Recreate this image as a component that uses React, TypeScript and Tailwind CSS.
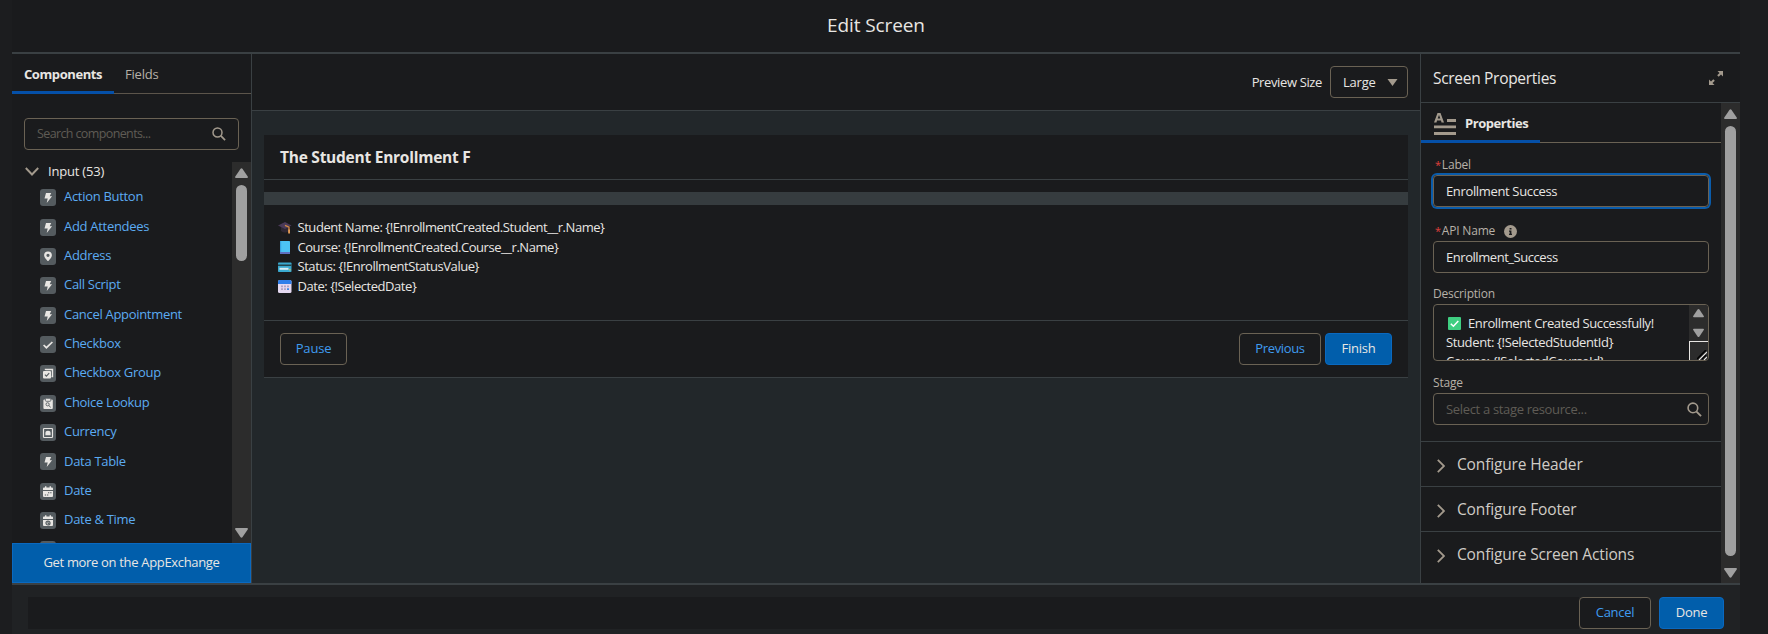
import React from "react";

type P = { children?: React.ReactNode; className?: string };

const T = ({ children, className = "" }: P) => (
  <span className={`block whitespace-nowrap ${className}`}>{children}</span>
);

function Glyph({ kind }: { kind: string }) {
  return (
    <svg width="16" height="17" viewBox="0 0 16 17" className="shrink-0">
      <rect width="16" height="17" rx="3" fill="#545b5f" />
      {kind === "bolt" && <path d="M6 4h5.2L9.700 7.200h2.400L6.700 13.900 7.700 9.500H4.500z" fill="#e8e6e3" />}
      {kind === "pin" && (
        <path fillRule="evenodd" d="M8 3.4a3.9 3.9 0 0 0-3.9 3.9c0 2.3 2.6 4.4 3.3 5.5.3.4.9.4 1.2 0 .7-1.1 3.3-3.2 3.3-5.5A3.9 3.9 0 0 0 8 3.4zm0 2.3a1.6 1.6 0 1 1 0 3.2 1.6 1.6 0 0 1 0-3.2z" fill="#e8e6e3" />
      )}
      {kind === "check" && <path d="M3.6 9l2.8 2.7 6-5.7" stroke="#e8e6e3" strokeWidth="1.7" fill="none" />}
      {kind === "group" && (
        <>
          <path d="M5.5 5V4.500h7v7h-1" stroke="#e8e6e3" strokeWidth="1.4" fill="none" />
          <rect x="3" y="6" width="8" height="7.5" rx="1" fill="#e8e6e3" />
          <path d="M4.9 9.7l1.5 1.5 2.8-3" stroke="#545b5f" strokeWidth="1.1" fill="none" />
        </>
      )}
      {kind === "lookup" && (
        <>
          <rect x="3.4" y="4.500" width="9.4" height="9.500" rx="1" fill="#e8e6e3" />
          <rect x="5.4" y="3.300" width="5.4" height="3" rx="0.8" fill="#e8e6e3" stroke="#545b5f" strokeWidth="0.8" />
          <circle cx="7.6" cy="9.3" r="1.6" stroke="#545b5f" strokeWidth="0.9" fill="none" />
          <path d="M8.9 10.6l1.8 1.7" stroke="#545b5f" />
        </>
      )}
      {kind === "currency" && (
        <>
          <rect x="3.5" y="4.5" width="9" height="9" rx="0.8" stroke="#e8e6e3" strokeWidth="1.2" fill="none" />
          <path d="M5.4 11.2V9.2a2.6 2.4 0 0 1 5.2 0v2z" fill="#e8e6e3" />
        </>
      )}
      {(kind === "date" || kind === "datetime") && (
        <>
          <path d="M3 7V5.4a1 1 0 0 1 1-1h1V3.3h1.4v1.1h3.2V3.3H11v1.1h1a1 1 0 0 1 1 1V7z" fill="#e8e6e3" />
          <path d="M3 7.9h10V13a1 1 0 0 1-1 1H4a1 1 0 0 1-1-1z" fill="#e8e6e3" />
          {kind === "date" ? (
            <path d="M8 9.7h1.3M10.2 9.7h1.3M4.8 12h1.3M7 12h1.3" stroke="#545b5f" strokeWidth="1.1" />
          ) : (
            <path d="M8 9a2 2 0 1 1 0 4 2 2 0 0 1 0-4zM8 9.6v1.6l1 .5" stroke="#545b5f" strokeWidth="1.200" fill="none" />
          )}
        </>
      )}
    </svg>
  );
}

const Search = ({ size = 14 }: { size?: number }) => (
  <svg width={size} height={size} viewBox="0 0 14 14" fill="none" stroke="#a39a8d" className="shrink-0">
    <circle cx="5.5" cy="5.5" r="4.5" strokeWidth="1.5" />
    <path d="M8.9 8.9l4.2 4.2" strokeWidth="1.7" />
  </svg>
);

const Tri = ({ down = false, w = 13 }: { down?: boolean; w?: number }) => (
  <svg width={w} height="10" viewBox="0 0 13 10" className="shrink-0" fill="#a0a0a0">
    {down ? (
      <path d="M1 0h11q1.4.3.7 1.5L7.6 9q-1.1 1.3-2.2 0L.3 1.5Q-.4.3 1 0z" />
    ) : (
      <path d="M1 10h11q1.4-.3.7-1.5L7.6 1Q6.500-.3 5.400 1L.3 8.500Q-.4 9.700 1 10z" />
    )}
  </svg>
);

const items: [string, string][] = [
  ["bolt", "Action Button"],
  ["bolt", "Add Attendees"],
  ["pin", "Address"],
  ["bolt", "Call Script"],
  ["bolt", "Cancel Appointment"],
  ["check", "Checkbox"],
  ["group", "Checkbox Group"],
  ["lookup", "Choice Lookup"],
  ["currency", "Currency"],
  ["bolt", "Data Table"],
  ["date", "Date"],
  ["datetime", "Date & Time"],
  ["bolt", ""],
];

function Left() {
  return (
    <aside className="flex w-[240px] shrink-0 flex-col border-r border-[#3a4043]">
      <div className="flex h-10 border-b border-[#5c554b]">
        <div className="h-10 w-[102px] border-b-3 border-[#0550a8] pl-3 pt-[10px] leading-[20px]">
          <T className="font-bold tracking-[-0.42px]">Components</T>
        </div>
        <T className="pl-[11px] pt-[10px] leading-[20px] tracking-[-0.2px] text-[#b7b1a8]">Fields</T>
      </div>
      <div className="mx-3 mt-6 flex h-8 w-[215px] items-center justify-between rounded border border-[#6a6254] pl-3 pr-3">
        <T className="pt-px text-[12.500px] tracking-[-0.620px] text-[#5f5b55]">Search components...</T>
        <Search />
      </div>
      <div className="mt-3 flex h-[381px]">
        <div className="flex-1 overflow-hidden">
          <div className="flex h-[18px] items-center gap-[9px] pl-[13px]">
            <svg width="14" height="9" viewBox="0 0 14 9" fill="none" stroke="#a39a8d" strokeWidth="1.900">
              <path d="M.8 1L7 7.500 13.200 1" />
            </svg>
            <T className="pt-[2px] tracking-[-0.2px]">Input (53)</T>
          </div>
          <ul className="mt-[3px]">
            {items.map(([k, t], i) => (
              <li key={i} className="flex h-[29.35px] items-center gap-2 pl-7 text-[#5cabf2]">
                <Glyph kind={k} />
                <T className="-mt-[1px]">{t}</T>
              </li>
            ))}
          </ul>
        </div>
        <div className="flex w-[19px] flex-col items-center bg-[#2c2c2c] pt-[6px] pb-[5px]">
          <Tri />
          <div className="mt-[7px] h-[76px] w-[11px] rounded-full bg-[#a0a0a0]" />
          <div className="flex-1" />
          <Tri down />
        </div>
      </div>
      <button className="flex h-10 items-center justify-center border border-[#0a69c0] bg-[#015eab]">
        <T className="tracking-[-0.330px]">Get more on the AppExchange</T>
      </button>
    </aside>
  );
}

const cap = (
  <svg width="14" height="13" viewBox="0 0 14 13">
    <path d="M3 6v4q4 3 8 0V6z" fill="#2e2733" />
    <path d="M0 4.500L7 1l6.500 3.500L7 8z" fill="#4a3a58" />
    <path d="M7 4.300l4 1.800v5.500" stroke="#d48b45" strokeWidth="1.300" fill="none" />
    <path d="M10.200 8.500h1.800v4h-1.800z" fill="#e09a55" />
  </svg>
);
const book = (
  <svg width="14" height="13" viewBox="0 0 14 13">
    <rect x="2" width="10" height="13" rx=".6" fill="#4cc3f5" />
    <path d="M2 11h10v2H2z" fill="#5d6fc0" />
    <path d="M2 0h1.200v11H2z" fill="#38a4e2" />
  </svg>
);
const card = (
  <svg width="14" height="13" viewBox="0 0 14 13">
    <rect y="2.500" width="13.500" height="9.500" rx=".8" fill="#3aa9cf" />
    <path d="M0 4.500h13.500v1.500H0z" fill="#23454f" />
    <path d="M1.500 7.800h9v2h-9z" fill="#d9eef5" />
    <path d="M11.200 9h1.300v1.600h-1.300z" fill="#d9c25c" />
  </svg>
);
const cal = (
  <svg width="14" height="13" viewBox="0 0 14 13">
    <rect width="13.500" height="13" rx="1.500" fill="#e4d8f0" />
    <path d="M0 4V1.500Q0 0 1.500 0H12q1.500 0 1.500 1.500V4z" fill="#2f7fea" />
    <path d="M3 5.500h2v1.800H3zM6 5.500h2v1.800H6zM9 5.500h2v1.800H9zM3 8.200h2V10H3zM6 8.200h2V10H6z" fill="#b0a3c4" />
    <path d="M9 8.200h2V10H9z" fill="#3f8ae8" />
  </svg>
);

const BTN = "flex h-8 items-center justify-center rounded border";

function Center() {
  const rows: [React.ReactNode, string][] = [
    [cap, "Student Name: {!EnrollmentCreated.Student__r.Name}"],
    [book, "Course: {!EnrollmentCreated.Course__r.Name}"],
    [card, "Status: {!EnrollmentStatusValue}"],
    [cal, "Date: {!SelectedDate}"],
  ];
  return (
    <main className="flex min-w-0 flex-1 flex-col bg-[#22272a]">
      <div className="flex h-[57px] items-center justify-end gap-2 border-b border-[#3a4043] bg-[#1a1b1d] pr-3">
        <T className="pt-px tracking-[-0.370px]">Preview Size</T>
        <div className="flex h-8 w-[78px] items-center justify-between rounded border border-[#6a6254] pl-3 pr-[9px]">
          <T className="pt-px tracking-[-0.2px]">Large</T>
          <svg width="11" height="7" viewBox="0 0 11 7" fill="#a39a8d"><path d="M.5 0h10L5.500 7z" /></svg>
        </div>
      </div>
      <section className="mx-3 mt-6 flex h-[243px] flex-col border-b border-[#3a4043] bg-[#1a1b1d]">
        <div className="flex h-[45px] items-center border-b border-[#3a4043] pl-4">
          <T className="pt-[2px] text-[15.500px] font-bold tracking-[-0.250px]">The Student Enrollment F</T>
        </div>
        <div className="mt-3 h-[13px] bg-[#363c3f]" />
        <div className="mt-[13px] flex-1 pl-[14px]">
          {rows.map(([ic, t]) => (
            <div key={t} className="flex h-[19.500px] items-center gap-[5.500px]">
              {ic}
              <T className="tracking-[-0.450px]">{t}</T>
            </div>
          ))}
        </div>
        <div className="flex h-[57px] items-center border-t border-[#3a4043] px-4">
          <button className={`${BTN} w-[67px] border-[#6a6254] text-[#3f9bf0]`}><T className="tracking-[-0.2px]">Pause</T></button>
          <div className="flex-1" />
          <button className={`${BTN} mr-1 w-[82px] border-[#6a6254] text-[#3f9bf0]`}><T className="tracking-[-0.350px]">Previous</T></button>
          <button className={`${BTN} w-[67px] border-[#0a69c0] bg-[#015eab]`}><T className="tracking-[-0.2px]">Finish</T></button>
        </div>
      </section>
    </main>
  );
}

const Star = () => <span className="text-[11px] text-[#e0403c]">*</span>;
const FIELD = "flex h-8 w-[276px] items-center rounded border border-[#6a6254] px-3";
const LBL = "flex h-[18px] items-center text-[12px] tracking-[-0.2px] text-[#b7b1a8]";

function Right() {
  return (
    <aside className="flex w-[320px] shrink-0 flex-col border-l border-[#3a4043]">
      <div className="flex h-[49px] items-center justify-between border-b border-[#3a4043] pl-3 pr-[17px]">
        <T className="pt-[2px] text-[15.500px]">Screen Properties</T>
        <svg width="14" height="14" viewBox="0 0 14 14" fill="#a39a8d">
          <path d="M8.500 0H14v5.500l-2-2-2.300 2.300-1.500-1.500L10.500 2zM0 8.500l2 2 2.300-2.300 1.500 1.500L3.500 12l2 2H0z" />
        </svg>
      </div>
      <div className="flex min-h-0 flex-1">
        <div className="flex-1">
          <div className="flex h-10 border-b border-[#6a6254]">
            <div className="flex h-10 w-[119px] items-start gap-[9px] border-b-3 border-[#0550a8] pl-[13px] pt-[10px]">
              <svg width="22" height="22" viewBox="0 0 22 22" fill="#a39a8d" className="shrink-0">
                <path fillRule="evenodd" d="M0 9.500L3.500 0h3L10 9.500H7.500L7 7.500H3l-.5 2zM3.700 5.500h2.600L5 2zM13 6h9v3h-9zM0 12.500h22v2.700H0zM0 19h22v3H0z" />
              </svg>
              <T className="font-bold leading-[20px] tracking-[-0.450px]">Properties</T>
            </div>
          </div>
          <div className="flex h-[298px] flex-col pl-3">
            <div className={`${LBL} mt-[13px] gap-[1px] pl-[2px]`}><Star /><T>Label</T></div>
            <div className={`${FIELD} mt-[1px] shadow-[0_0_0_2px_#0a5cab]`}><T className="pt-px tracking-[-0.350px]">Enrollment Success</T></div>
            <div className={`${LBL} mt-[15px] gap-[1px] pl-[2px]`}>
              <Star /><T>API Name</T>
              <svg width="13" height="13" viewBox="0 0 13 13" className="ml-[8px]">
                <circle cx="6.500" cy="6.500" r="6.500" fill="#a39a8d" />
                <path d="M5.600 2.900h1.900v1.600H5.600zM5 5.600h2.400v3.200H8v1.100H5V8.800h.7V6.700H5z" fill="#1a1b1d" />
              </svg>
            </div>
            <div className={`${FIELD} mt-[1px]`}><T className="pt-px tracking-[-0.450px]">Enrollment_Success</T></div>
            <div className={`${LBL} mt-[12px]`}><T>Description</T></div>
            <div className="mt-[1px] flex h-[57px] w-[276px] overflow-hidden rounded border border-[#6a6254]">
              <div className="flex-1 pl-3 pt-[9px] leading-[19px] tracking-[-0.370px]">
                <div className="flex h-[19px] items-center gap-[7px] pl-[2px]">
                  <svg width="13" height="13" viewBox="0 0 13 13">
                    <rect width="13" height="13" rx="1" fill="#3fce81" />
                    <path d="M2.800 6.800l2.600 2.500 4.900-5.300" stroke="#fff" strokeWidth="1.500" fill="none" />
                  </svg>
                  <T>Enrollment Created Successfully!</T>
                </div>
                <T>Student: {"{!SelectedStudentId}"}</T>
                <T>Course: {"{!SelectedCourseId}"}</T>
              </div>
              <div className="flex w-[19px] flex-col">
                <div className="flex h-[36px] flex-col items-center justify-between bg-[#2c2c2c] pb-[3px] pt-[3px]">
                  <Tri w={11} /><Tri w={11} down />
                </div>
                <div className="flex flex-1 items-end justify-end border-l border-t border-[#e8e6e3] bg-[#2c2c2c] pr-[1px]">
                  <svg width="10" height="10" viewBox="0 0 10 10" strokeWidth="1.500">
                    <path d="M0 9L9 0M5 9l4-4" stroke="#000" />
                    <path d="M2 10l8-8M7 10l3-3" stroke="#e8e6e3" strokeWidth="1.100" />
                  </svg>
                </div>
              </div>
            </div>
            <div className={`${LBL} mt-[13px]`}><T>Stage</T></div>
            <div className={`${FIELD} mt-[1px] justify-between pr-[6px]`}>
              <T className="pt-px tracking-[-0.330px] text-[#5f5b55]">Select a stage resource...</T>
              <Search size={15} />
            </div>
          </div>
          {["Configure Header", "Configure Footer", "Configure Screen Actions"].map((t) => (
            <div key={t} className="flex h-[45px] items-center gap-3 border-t border-[#3a4043] pl-4">
              <svg width="8" height="14" viewBox="0 0 8 14" fill="none" stroke="#a39a8d" strokeWidth="1.800" className="mt-[4px]">
                <path d="M.8.800L7 7 .8 13.200" />
              </svg>
              <T className="pt-px text-[15.500px] tracking-[-0.150px] text-[#d0ccc6]">{t}</T>
            </div>
          ))}
        </div>
        <div className="flex w-[19px] flex-col items-center bg-[#2c2c2c] pb-[5px] pt-[6px]">
          <Tri />
          <div className="mt-[7px] h-[430px] w-[11px] rounded-full bg-[#a0a0a0]" />
          <div className="flex-1" />
          <Tri down />
        </div>
      </div>
    </aside>
  );
}

export default function App() {
  return (
    <div className="h-[634px] w-[1768px] overflow-hidden bg-[#1c1d1f] pl-3 pr-7 font-['Open_Sans',sans-serif] text-[13px] tracking-[-0.3px] text-[#e8e6e3]">
      <div className="flex h-full flex-col bg-[#1a1b1d]">
        <header className="flex h-[54px] items-center justify-center border-b-2 border-[#3a4043]">
          <T className="pb-[2px] text-[19px] tracking-[-0.1px]">Edit Screen</T>
        </header>
        <div className="flex h-[529px]">
          <Left />
          <Center />
          <Right />
        </div>
        <footer className="flex h-[51px] border-t-2 border-[#3a4043] bg-[#202224] px-4 pt-3">
          <div className="h-8 flex-1 bg-[#1a1b1d]" />
          <button className={`${BTN} mr-2 w-[72px] border-[#6a6254] bg-[#1a1b1d] text-[#3f9bf0]`}><T>Cancel</T></button>
          <button className={`${BTN} w-[65px] border-[#0a69c0] bg-[#015eab]`}><T>Done</T></button>
        </footer>
      </div>
    </div>
  );
}
